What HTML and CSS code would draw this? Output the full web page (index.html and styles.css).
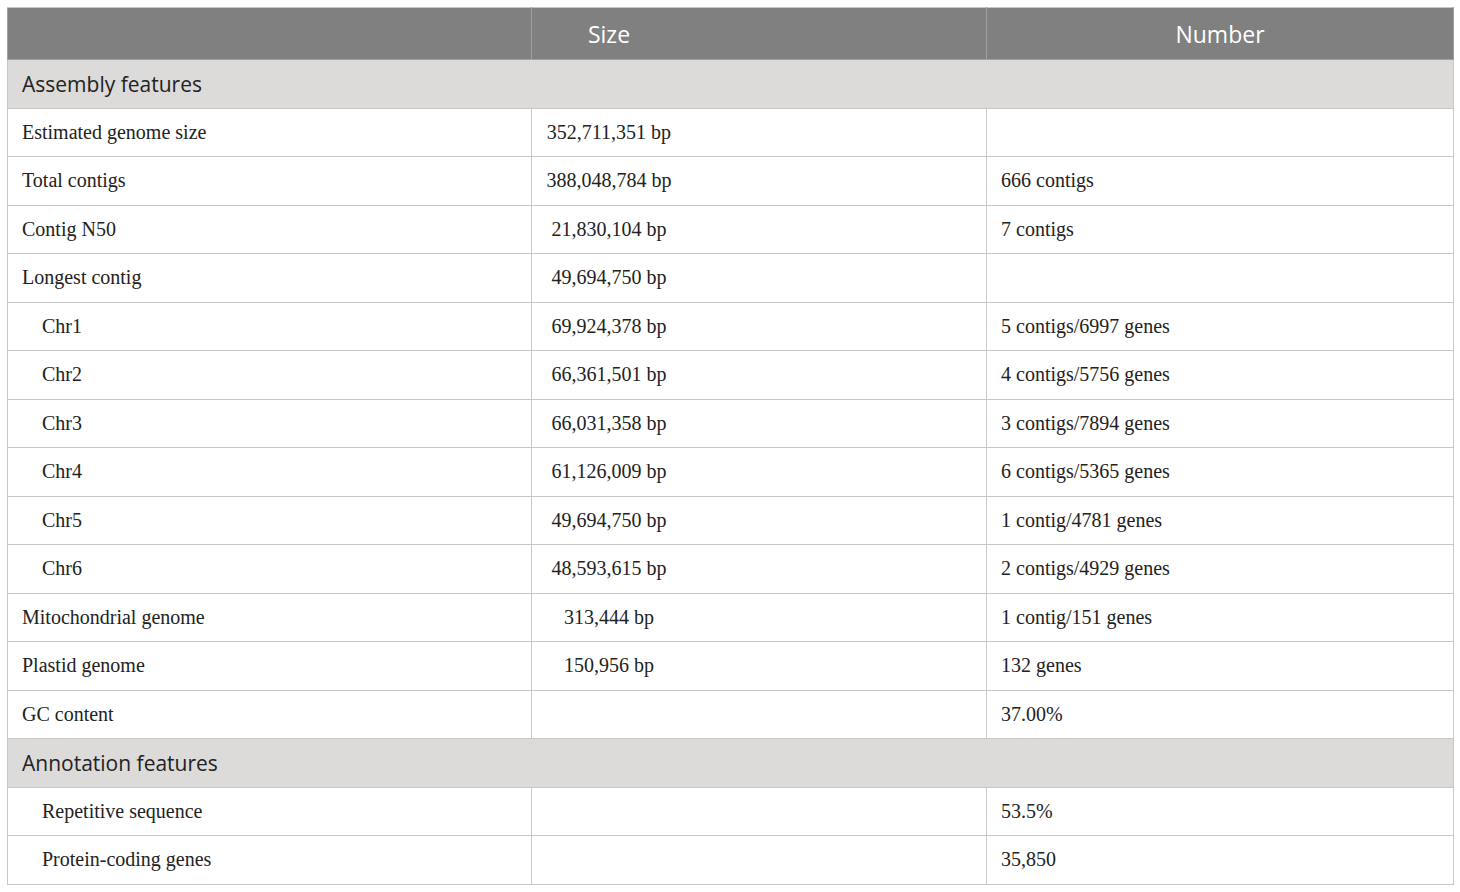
FILE: index.html
```html
<!DOCTYPE html>
<html>
<head>
<meta charset="utf-8">
<link rel="stylesheet" href="styles.css">
</head>
<body>
<table class="genome">
  <colgroup>
    <col class="c1"><col class="c2"><col class="c3">
  </colgroup>
  <thead>
    <tr class="head">
      <th></th>
      <th><div class="sz">Size</div></th>
      <th class="num-h">Number</th>
    </tr>
  </thead>
  <tbody>
    <tr class="section"><td colspan="3">Assembly features</td></tr>
    <tr><td>Estimated genome size</td><td><div class="sz">352,711,351 bp</div></td><td></td></tr>
    <tr><td>Total contigs</td><td><div class="sz">388,048,784 bp</div></td><td>666 contigs</td></tr>
    <tr><td>Contig N50</td><td><div class="sz">21,830,104 bp</div></td><td>7 contigs</td></tr>
    <tr><td>Longest contig</td><td><div class="sz">49,694,750 bp</div></td><td></td></tr>
    <tr><td class="ind">Chr1</td><td><div class="sz">69,924,378 bp</div></td><td>5 contigs/6997 genes</td></tr>
    <tr><td class="ind">Chr2</td><td><div class="sz">66,361,501 bp</div></td><td>4 contigs/5756 genes</td></tr>
    <tr><td class="ind">Chr3</td><td><div class="sz">66,031,358 bp</div></td><td>3 contigs/7894 genes</td></tr>
    <tr><td class="ind">Chr4</td><td><div class="sz">61,126,009 bp</div></td><td>6 contigs/5365 genes</td></tr>
    <tr><td class="ind">Chr5</td><td><div class="sz">49,694,750 bp</div></td><td>1 contig/4781 genes</td></tr>
    <tr><td class="ind">Chr6</td><td><div class="sz">48,593,615 bp</div></td><td>2 contigs/4929 genes</td></tr>
    <tr><td>Mitochondrial genome</td><td><div class="sz">313,444 bp</div></td><td>1 contig/151 genes</td></tr>
    <tr><td>Plastid genome</td><td><div class="sz">150,956 bp</div></td><td>132 genes</td></tr>
    <tr><td>GC content</td><td></td><td>37.00%</td></tr>
    <tr class="section"><td colspan="3">Annotation features</td></tr>
    <tr><td class="ind">Repetitive sequence</td><td></td><td>53.5%</td></tr>
    <tr><td class="ind">Protein-coding genes</td><td></td><td>35,850</td></tr>
  </tbody>
</table>
</body>
</html>
```
FILE: styles.css
```css
html, body {
  margin: 0;
  padding: 0;
  background: #ffffff;
}
body {
  padding: 7px 0 0 7px;
}
.genome {
  border-collapse: collapse;
  table-layout: fixed;
  width: 1446px;
  font-family: "Liberation Serif", "Times New Roman", serif;
  font-size: 20px;
  color: #222222;
}
.c1 { width: 524px; }
.c2 { width: 455px; }
.c3 { width: 467px; }
.genome td, .genome th {
  border: 1px solid #c8c8c8;
  padding: 0 0 0 14px;
  text-align: left;
  vertical-align: middle;
  height: 47.5px;
}
.genome tr.head th {
  background: #808080;
  color: #ffffff;
  font-family: "Open Sans", sans-serif;
  font-weight: 400;
  font-size: 23px;
  height: 51px;
  border-color: #a0a0a0;
  border-top-color: #c8c8c8;
}
.genome tr.head th.num-h {
  text-align: center;
  padding: 0;
}
.sz {
  width: 154px;
  margin-left: -14px;
  text-align: center;
}
.genome tr.section td {
  background: #dcdbd9;
  font-family: "Open Sans", sans-serif;
  font-size: 21px;
  color: #222222;
}
.genome td.ind {
  padding-left: 34px;
}
```
